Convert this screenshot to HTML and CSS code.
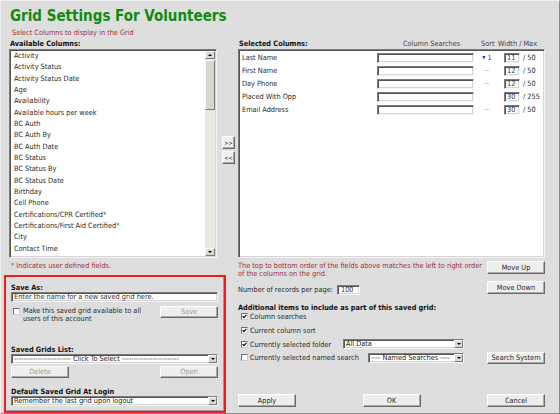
FILE: index.html
```html
<!DOCTYPE html>
<html lang="en">
<head>
<meta charset="utf-8">
<title>Grid Settings For Volunteers</title>
<link rel="stylesheet" href="styles.css">
</head>
<body>
<div class="window">
  <header class="head">
    <h1 class="title">Grid Settings For Volunteers</h1>
    <p class="subtitle">Select Columns to display in the Grid</p>
  </header>

  <div class="columns">
    <div class="avail">
      <div class="label">Available Columns:</div>
      <div class="listbox sunken">
        <ul class="items">
          <li>Activity</li>
          <li>Activity Status</li>
          <li>Activity Status Date</li>
          <li>Age</li>
          <li>Availability</li>
          <li>Available hours per week</li>
          <li>BC Auth</li>
          <li>BC Auth By</li>
          <li>BC Auth Date</li>
          <li>BC Status</li>
          <li>BC Status By</li>
          <li>BC Status Date</li>
          <li>Birthday</li>
          <li>Cell Phone</li>
          <li>Certifications/CPR Certified*</li>
          <li>Certifications/First Aid Certified*</li>
          <li>City</li>
          <li>Contact Time</li>
        </ul>
        <div class="vscroll">
          <span class="sb-btn up"></span>
          <span class="sb-track"><span class="sb-thumb"></span></span>
          <span class="sb-btn down"></span>
        </div>
      </div>
    </div>

    <div class="movers">
      <button class="btn mini">&gt;&gt;</button>
      <button class="btn mini">&lt;&lt;</button>
    </div>

    <div class="selected">
      <div class="sel-head">
        <span class="label">Selected Columns:</span>
        <span>Column Searches</span>
        <span>Sort</span>
        <span>Width / Max</span>
      </div>
      <div class="selbox sunken">
        <div class="sel-row">
          <span class="name">Last Name</span>
          <span class="field search"></span>
          <span class="sort asc"><span class="tri">&#9660;</span> 1</span>
          <span class="field width">11</span>
          <span class="max">/ 50</span>
        </div>
        <div class="sel-row">
          <span class="name">First Name</span>
          <span class="field search"></span>
          <span class="sort none">&mdash;</span>
          <span class="field width">12</span>
          <span class="max">/ 50</span>
        </div>
        <div class="sel-row">
          <span class="name">Day Phone</span>
          <span class="field search"></span>
          <span class="sort none">&mdash;</span>
          <span class="field width">12</span>
          <span class="max">/ 50</span>
        </div>
        <div class="sel-row">
          <span class="name">Placed With Opp</span>
          <span class="field search"></span>
          <span class="sort"></span>
          <span class="field width">30</span>
          <span class="max">/ 255</span>
        </div>
        <div class="sel-row">
          <span class="name">Email Address</span>
          <span class="field search"></span>
          <span class="sort none">&mdash;</span>
          <span class="field width">30</span>
          <span class="max">/ 50</span>
        </div>
      </div>
    </div>
  </div>

  <div class="lower">
    <div class="lower-left">
      <p class="note">* Indicates user defined fields.</p>
      <div class="saved">
        <div class="label">Save As:</div>
        <div class="field text-input">Enter the name for a new saved grid here.</div>
        <div class="share-row">
          <span class="check"></span>
          <span class="share-text">Make this saved grid available to all<br>users of this account</span>
          <button class="btn disabled">Save</button>
        </div>

        <div class="label grids-label">Saved Grids List:</div>
        <div class="select">
          <span class="val">------------------------ Click To Select ------------------------</span>
          <span class="arrow"></span>
        </div>
        <div class="grid-actions">
          <button class="btn disabled">Delete</button>
          <button class="btn disabled">Open</button>
        </div>

        <div class="label default-label">Default Saved Grid At Login</div>
        <div class="select">
          <span class="val">Remember the last grid upon logout</span>
          <span class="arrow"></span>
        </div>
      </div>
    </div>

    <div class="lower-right">
      <div class="order-row">
        <p class="order-note">The top to bottom order of the fields above matches the left to right order<br>of the columns on the grid.</p>
        <button class="btn">Move Up</button>
      </div>
      <div class="records-row">
        <div class="records">
          <span class="records-label">Number of records per page:</span>
          <span class="field records-input">100</span>
        </div>
        <button class="btn">Move Down</button>
      </div>
      <div class="extras-title">Additional items to include as part of this saved grid:</div>
      <div class="opt">
        <span class="check on"><svg viewBox="0 0 5 5"><polyline points="0.6,2.2 1.9,3.6 4.4,0.9"/></svg></span>
        <span>Column searches</span>
      </div>
      <div class="opt">
        <span class="check on"><svg viewBox="0 0 5 5"><polyline points="0.6,2.2 1.9,3.6 4.4,0.9"/></svg></span>
        <span>Current column sort</span>
      </div>
      <div class="opt">
        <span class="check on"><svg viewBox="0 0 5 5"><polyline points="0.6,2.2 1.9,3.6 4.4,0.9"/></svg></span>
        <span class="opt-label folder">Currently selected folder</span>
        <div class="select folder-select">
          <span class="val">All Data</span>
          <span class="arrow"></span>
        </div>
      </div>
      <div class="opt">
        <span class="check"></span>
        <span class="opt-label named">Currently selected named search</span>
        <div class="select named-select">
          <span class="val">---- Named Searches ----</span>
          <span class="arrow"></span>
        </div>
        <button class="btn push-right">Search System</button>
      </div>
      <div class="actions">
        <button class="btn">Apply</button>
        <button class="btn">OK</button>
        <button class="btn">Cancel</button>
      </div>
    </div>
  </div>
</div>
</body>
</html>
```

FILE: styles.css
```css
* {
  box-sizing: border-box;
}

html,
body {
  margin: 0;
  padding: 0;
}

body {
  background: #dedede;
  font-family: "DejaVu Sans Condensed", "DejaVu Sans", "Liberation Sans", sans-serif;
  font-stretch: condensed;
  font-size: 7.3px;
  color: #1e1e1e;
}

p {
  margin: 0;
}

/* dialog frame */
.window {
  width: 560px;
  height: 414px;
  overflow: hidden;
  background: #dedede;
  border: 1px solid;
  border-color: #f0f0f0 #8a8a8a #8a8a8a #f0f0f0;
}

.title {
  margin: 8px 0 0 9px;
  font-size: 15px;
  line-height: 15px;
  font-weight: bold;
  color: #138a13;
}

.subtitle {
  margin: 4px 0 0 11px;
  line-height: 9px;
  color: #a0303a;
}

.label {
  font-weight: bold;
  line-height: 9px;
  color: #111;
}

/* classic sunken control edge */
.sunken,
.field,
.select {
  background: #fff;
  border: 1px solid;
  border-color: #7c7c7c #f4f4f4 #f4f4f4 #7c7c7c;
  box-shadow: inset 1px 1px 0 #555, inset -1px -1px 0 #d6d6d6;
}

/* ---------- column pickers ---------- */
.columns {
  display: grid;
  grid-template-columns: 208px 21px 307px;
  margin: 2px 0 0 8px;
}

.avail .label {
  margin-bottom: 1px;
  padding-left: 1px;
}

.listbox {
  height: 209px;
  display: flex;
}

.items {
  list-style: none;
  margin: 0;
  padding: 0 0 0 4px;
  flex: 1;
  overflow: hidden;
  line-height: 11.33px;
  color: #2a2a2a;
}

.items li {
  white-space: nowrap;
}

.vscroll {
  width: 10px;
  margin: 1px 1px 1px 0;
  display: flex;
  flex-direction: column;
  background: #ebe9e4;
}

.sb-btn {
  height: 8px;
  background: #dcd9d2;
  border: 1px solid;
  border-color: #fbfbfb #7a7a7a #7a7a7a #fbfbfb;
  display: flex;
  align-items: center;
  justify-content: center;
}

.sb-btn::after {
  content: "";
  border-left: 2px solid transparent;
  border-right: 2px solid transparent;
}

.sb-btn.up::after {
  border-bottom: 2px solid #000;
}

.sb-btn.down::after {
  border-top: 2px solid #000;
}

.sb-track {
  flex: 1;
  padding-top: 1px;
}

.sb-thumb {
  display: block;
  height: 50px;
  background: #d9d6cf;
  border: 1px solid;
  border-color: #fbfbfb #7a7a7a #7a7a7a #fbfbfb;
}

.movers {
  display: flex;
  flex-direction: column;
  justify-content: center;
  gap: 2px;
  padding: 3px 0 0 5px;
}

.selected .sel-head {
  display: grid;
  grid-template-columns: 165px 78px 17px auto;
  line-height: 9px;
  margin-bottom: 1px;
  color: #444;
}

.sel-head .label {
  padding-left: 1px;
}

.selbox {
  height: 209px;
  padding-top: 1px;
}

.sel-row {
  display: grid;
  grid-template-columns: 138px 97px 30px 16px auto;
  height: 13px;
  align-items: center;
  line-height: 13px;
  color: #2a2a2a;
}

.sel-row .name {
  padding-left: 3px;
}

.field {
  display: block;
  height: 10px;
  line-height: 8px;
  padding-left: 2px;
  white-space: nowrap;
  overflow: hidden;
  color: #333;
}

.sort {
  text-align: center;
  padding-right: 4px;
  line-height: 13px;
}

.sort.asc {
  color: #2b2bff;
}

.sort .tri {
  font-size: 4.5px;
  vertical-align: 1px;
}

.sort.none {
  color: #8a8a8a;
  font-size: 5.5px;
}

.max {
  padding-left: 3px;
}

/* ---------- push buttons ---------- */
.btn {
  appearance: none;
  margin: 0;
  padding: 0;
  font: inherit;
  width: 58px;
  height: 13px;
  line-height: 10px;
  color: #1e1e1e;
  background: #eeeeee;
  border: 1px solid;
  border-color: #fdfdfd #6a6a6a #6a6a6a #fdfdfd;
  box-shadow: inset -1px -1px 0 #a9a9a9;
  text-align: center;
  white-space: nowrap;
}

.btn.mini {
  width: 13px;
  height: 13px;
  font-size: 5.5px;
  line-height: 10px;
}

.btn.disabled {
  color: #9c9c9c;
  height: 12px;
}

/* ---------- lower area ---------- */
.lower {
  display: grid;
  grid-template-columns: 222px 307px;
  column-gap: 12px;
  margin-left: 3px;
  height: 155px;
}

.note {
  margin: 3px 0 0 7px;
  line-height: 9px;
  color: #a0303a;
}

.saved {
  margin-top: 5px;
  height: 138px;
  border: 2px solid #ee1c1c;
  box-shadow: inset -1px -1px 0 #9c9c9c;
  padding: 6px 6px 0 5px;
}

.text-input {
  height: 10px;
  color: #333;
}

.share-row {
  display: flex;
  align-items: flex-start;
  height: 16px;
  margin-top: 4px;
}

.share-row .check {
  margin: 2px 0 0 2px;
}

.share-text {
  margin: 1px 0 0 3px;
  line-height: 7.6px;
  color: #2a2a2a;
}

.share-row .btn {
  margin-left: auto;
}

.grids-label {
  margin-top: 22.5px;
}

.select {
  display: flex;
  height: 10px;
}

.select .val {
  flex: 1;
  padding-left: 2px;
  line-height: 8px;
  white-space: nowrap;
  overflow: hidden;
  color: #222;
}

.select .arrow {
  width: 9px;
  background: #dcd9d2;
  border: 1px solid;
  border-color: #fbfbfb #7a7a7a #7a7a7a #fbfbfb;
  display: flex;
  align-items: center;
  justify-content: center;
}

.select .arrow::after {
  content: "";
  border-left: 2px solid transparent;
  border-right: 2px solid transparent;
  border-top: 2px solid #000;
}

.grid-actions {
  display: flex;
  justify-content: space-between;
  margin-top: 2px;
}

.default-label {
  margin-top: 9.5px;
}

.lower-right {
  display: flex;
  flex-direction: column;
}

.order-row {
  display: flex;
  align-items: flex-start;
  margin-top: 3px;
  height: 20px;
}

.order-note {
  margin-top: 1.2px;
  line-height: 7.8px;
  color: #a0303a;
}

.order-row .btn,
.records-row .btn {
  margin-left: auto;
  flex: none;
}

.records-row {
  display: flex;
  align-items: flex-start;
  height: 23px;
}

.records {
  display: flex;
  align-items: center;
  margin-top: 4px;
  line-height: 10px;
  color: #2a2a2a;
}

.records-label {
  width: 99px;
}

.records-input {
  width: 23px;
  padding-left: 3px;
}

.extras-title {
  font-weight: bold;
  line-height: 7px;
  color: #111;
}

.opt {
  display: flex;
  align-items: center;
  height: 11px;
  padding-left: 3px;
  line-height: 11px;
  color: #2a2a2a;
}

.opt + .opt {
  margin-top: 2.8px;
}

.check {
  flex: none;
  width: 7px;
  height: 7px;
  background: #fff;
  border: 1px solid;
  border-color: #6f6f6f #cfcfcf #cfcfcf #6f6f6f;
  display: flex;
  align-items: center;
  justify-content: center;
}

.opt .check {
  margin-right: 2px;
}

.check svg {
  width: 5px;
  height: 5px;
  fill: none;
  stroke: #000;
  stroke-width: 1.1;
}

.opt-label.folder {
  width: 93px;
}

.opt-label.named {
  width: 118px;
}

.folder-select {
  width: 121px;
}

.named-select {
  width: 96px;
}

.push-right {
  margin-left: auto;
  height: 12px;
}

.actions {
  display: flex;
  justify-content: space-between;
  margin-top: auto;
  margin-bottom: 6px;
}
```
